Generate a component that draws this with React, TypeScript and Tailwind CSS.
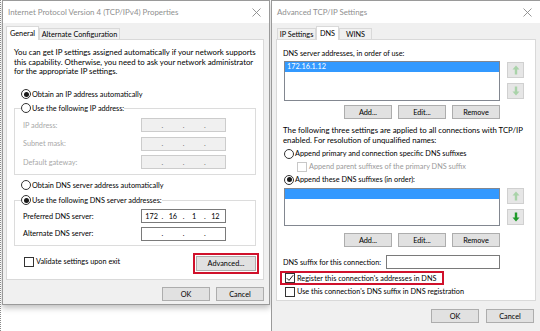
import React from "react";

type Kids = { children?: React.ReactNode };

function CloseX() {
  return (
    <svg width="9" height="9" viewBox="0 0 9 9" className="shrink-0">
      <path d="M0.5 0.5 L8.5 8.5 M8.5 0.5 L0.5 8.5" stroke="#8a8a8a" strokeWidth="0.9" fill="none" />
    </svg>
  );
}

function TitleBar({ title }: { title: string }) {
  return (
    <div className="h-[22px] bg-white flex items-center justify-between pl-[5px] pr-[8px]">
      <span className="text-[#8f8f8f] text-[7.9px] leading-[22px]">{title}</span>
      <CloseX />
    </div>
  );
}

function Tab({ label, active, w }: { label: string; active?: boolean; w: string }) {
  return active ? (
    <div className={`relative z-10 -mb-px h-[14px] bg-white border border-b-0 border-[#d9d9d9] flex items-center justify-center ${w}`}>
      {label}
    </div>
  ) : (
    <div className={`h-[11px] bg-[#f0f0f0] border border-b-0 border-[#d9d9d9] flex items-center justify-center ${w}`}>
      {label}
    </div>
  );
}

function Radio({ checked, label }: { checked?: boolean; label: string }) {
  return (
    <div className="flex items-center h-[13px] bg-white">
      <span className="w-[10px] h-[10px] rounded-full border border-[#333] bg-white flex items-center justify-center shrink-0">
        {checked && <span className="w-[5px] h-[5px] rounded-full bg-[#1a1a1a]" />}
      </span>
      <span className="ml-px">{label}</span>
    </div>
  );
}

function Check({ checked, disabled, label }: { checked?: boolean; disabled?: boolean; label: string }) {
  return (
    <div className="flex items-center h-[13px]">
      <span
        className={`w-[10px] h-[10px] border bg-white flex items-center justify-center shrink-0 ${
          disabled ? "border-[#c8c8c8]" : "border-[#333]"
        }`}
      >
        {checked && (
          <svg width="8" height="8" viewBox="0 0 8 8">
            <path d="M0.8 4.2 L3 6.4 L7.2 1.2" stroke="#222" strokeWidth="1" fill="none" />
          </svg>
        )}
      </span>
      <span className={`ml-[2px] ${disabled ? "text-[#9a9a9a]" : ""}`}>{label}</span>
    </div>
  );
}

function Btn({ children, w }: Kids & { w: string }) {
  return (
    <div className={`h-[14px] border border-[#adadad] bg-[#e1e1e1] flex items-center justify-center ${w}`}>
      {children}
    </div>
  );
}

function IpBox({ value, disabled }: { value?: string[]; disabled?: boolean }) {
  const parts = value ?? ["", "", "", ""];
  return (
    <div
      className={`w-[85px] h-[14px] border flex items-center ${
        disabled ? "bg-[#f0f0f0] border-[#cccccc] text-[#6d6d6d]" : "bg-white border-[#7a7a7a]"
      }`}
    >
      {parts.map((p, i) => (
        <React.Fragment key={i}>
          <span className="flex-1 text-center">{p}</span>
          {i < 3 && <span className="w-[2px] text-center">.</span>}
        </React.Fragment>
      ))}
    </div>
  );
}

function IpRow({ label, value, disabled }: { label: string; value?: string[]; disabled?: boolean }) {
  return (
    <div className="flex items-center h-[14px]">
      <span className={`w-[118px] ${disabled ? "text-[#a8a8a8]" : ""}`}>{label}</span>
      <IpBox value={value} disabled={disabled} />
    </div>
  );
}

function Arrow({ up, bright }: { up?: boolean; bright?: boolean }) {
  const c = bright ? "#1f9a2a" : "#a9d3a9";
  return (
    <div className="w-[17px] h-[16px] border border-[#d0d0d0] bg-[#e6e6e6] flex items-center justify-center">
      <svg width="8" height="10" viewBox="0 0 8 10" className={up ? "" : "rotate-180"}>
        <path d="M4 0.5 L7.5 4.5 L5.2 4.5 L5.2 9.5 L2.8 9.5 L2.8 4.5 L0.5 4.5 Z" fill={c} />
      </svg>
    </div>
  );
}

function ListBox({ h, text }: { h: string; text?: string }) {
  return (
    <div className={`w-[216px] border border-[#828790] bg-white ${h}`}>
      <div className="h-[10px] bg-[#3399ff] text-white leading-[10px] pl-[2px]">{text}</div>
    </div>
  );
}

function IPv4Dialog() {
  return (
    <div className="w-[268px] h-[305px] border border-[#9a9a9a] bg-[#f0f0f0] shadow-[0_3px_6px_rgba(0,0,0,0.25)] flex flex-col shrink-0">
      <TitleBar title="Internet Protocol Version 4 (TCP/IPv4) Properties" />
      <div className="pl-[3px] pr-[5px] flex flex-col">
        <div className="h-[16px] flex items-end">
          <Tab label="General" active w="w-[33px]" />
          <Tab label="Alternate Configuration" w="w-[81px]" />
        </div>
        <div className="h-[241px] bg-white border border-[#d9d9d9] px-[7px] flex flex-col">
          <p className="mt-[8px] leading-[9.5px] text-[7.8px]">
            You can get IP settings assigned automatically if your network supports
            <br />
            this capability. Otherwise, you need to ask your network administrator
            <br />
            for the appropriate IP settings.
          </p>
          <div className="mt-[11px] ml-[7px]">
            <Radio checked label="Obtain an IP address automatically" />
          </div>
          <fieldset className="mt-px border border-[#dcdcdc] pl-[8px] pt-[3.5px] pb-[5px] flex flex-col gap-[4.5px]">
            <legend className="-ml-[2px]">
              <Radio label="Use the following IP address:" />
            </legend>
            <IpRow label="IP address:" disabled />
            <IpRow label="Subnet mask:" disabled />
            <IpRow label="Default gateway:" disabled />
          </fieldset>
          <div className="mt-[3.5px] ml-[7px]">
            <Radio label="Obtain DNS server address automatically" />
          </div>
          <fieldset className="mt-[2px] border border-[#dcdcdc] pl-[8px] pt-[2.5px] pb-[4px] flex flex-col gap-[3.5px]">
            <legend className="-ml-[2px]">
              <Radio checked label="Use the following DNS server addresses:" />
            </legend>
            <IpRow label="Preferred DNS server:" value={["172", "16", "1", "12"]} />
            <IpRow label="Alternate DNS server:" />
          </fieldset>
          <div className="mt-[7px] flex items-center justify-between -mr-[3px]">
            <div className="ml-[10px] -mt-[3px]">
              <Check label="Validate settings upon exit" />
            </div>
            <div className="border-2 border-[#d0112b] p-px">
              <div className="w-[60px] h-[15px] border border-[#adadad] bg-[#e1e1e1] flex items-center justify-center">
                Advanced...
              </div>
            </div>
          </div>
        </div>
        <div className="mt-[7px] flex justify-end gap-[6px]">
          <Btn w="w-[48px]">OK</Btn>
          <Btn w="w-[48px]">Cancel</Btn>
        </div>
      </div>
    </div>
  );
}

function AdvancedDialog() {
  return (
    <div className="flex-1 h-[331px] border-l border-t border-[#9a9a9a] bg-[#f0f0f0] flex flex-col">
      <TitleBar title="Advanced TCP/IP Settings" />
      <div className="pl-[4px] pr-[4px] flex flex-col">
        <div className="h-[16px] flex items-end pl-px">
          <Tab label="IP Settings" w="w-[39px]" />
          <Tab label="DNS" active w="w-[23px]" />
          <Tab label="WINS" w="w-[33px]" />
        </div>
        <div className="h-[262px] bg-white border border-[#d9d9d9] px-[6px] flex flex-col">
          <div className="mt-[8px] leading-[11px]">DNS server addresses, in order of use:</div>
          <div className="mt-[2px] ml-px flex items-start gap-[7px]">
            <ListBox h="h-[40px]" text="172.16.1.12" />
            <div className="mt-px flex flex-col gap-[5px]">
              <Arrow up />
              <Arrow />
            </div>
          </div>
          <div className="mt-[4px] w-[217px] flex justify-end gap-[6px]">
            <Btn w="w-[48px]">Add...</Btn>
            <Btn w="w-[48px]">Edit...</Btn>
            <Btn w="w-[48px]">Remove</Btn>
          </div>
          <p className="mt-[7px] leading-[9.5px] text-[7.8px]">
            The following three settings are applied to all connections with TCP/IP
            <br />
            enabled. For resolution of unqualified names:
          </p>
          <div className="mt-[2px] ml-px">
            <Radio label="Append primary and connection specific DNS suffixes" />
          </div>
          <div className="ml-[14px]">
            <Check disabled label="Append parent suffixes of the primary DNS suffix" />
          </div>
          <div className="ml-px">
            <Radio checked label="Append these DNS suffixes (in order):" />
          </div>
          <div className="mt-[2px] ml-px flex items-start gap-[7px]">
            <ListBox h="h-[38px]" />
            <div className="flex flex-col gap-[5px]">
              <Arrow up />
              <Arrow bright />
            </div>
          </div>
          <div className="mt-[7px] w-[217px] flex justify-end gap-[6px]">
            <Btn w="w-[48px]">Add...</Btn>
            <Btn w="w-[48px]">Edit...</Btn>
            <Btn w="w-[48px]">Remove</Btn>
          </div>
          <div className="mt-[8px] w-[217px] flex items-center justify-between">
            <span>DNS suffix for this connection:</span>
            <div className="w-[114px] h-[14px] border border-[#7a7a7a] bg-white" />
          </div>
          <div className="mt-[2px] -ml-[3px] self-start border-2 border-[#d0112b] pl-[3px] pr-[6px] h-[14px] flex items-center">
            <Check checked label="Register this connection's addresses in DNS" />
          </div>
          <div className="ml-[2px]">
            <Check label="Use this connection's DNS suffix in DNS registration" />
          </div>
        </div>
        <div className="mt-[8px] mr-[2px] flex justify-end gap-[7px]">
          <Btn w="w-[48px]">OK</Btn>
          <Btn w="w-[48px]">Cancel</Btn>
        </div>
      </div>
    </div>
  );
}

export default function App() {
  return (
    <div className="w-[540px] h-[331px] bg-white overflow-hidden flex items-start pl-px border-l border-dotted border-[#8a8a8a] gap-px font-['Lato',sans-serif] text-[7.3px] leading-[13px] text-black whitespace-nowrap">
      <IPv4Dialog />
      <AdvancedDialog />
    </div>
  );
}
